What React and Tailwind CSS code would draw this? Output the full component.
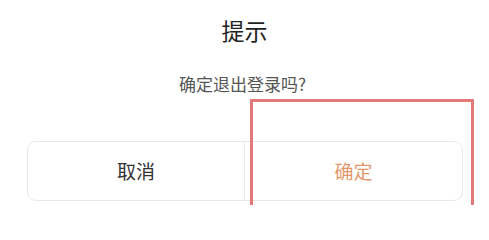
export default function App() {
  return (
    <div
      className="relative w-[489px] h-[205px] overflow-hidden bg-white"
      style={{ fontFamily: '"Noto Sans CJK SC", "Noto Sans", sans-serif' }}
    >
      {/* Title */}
      <h2 className="pt-[15px] text-center text-[23px] leading-[30px] text-[#222]">提示</h2>

      {/* Message */}
      <p className="mt-[27px] pr-[4px] text-center text-[17px] leading-[24px] text-[#555]">确定退出登录吗?</p>

      {/* Buttons */}
      <div className="mt-[45px] ml-[27px] w-[436px] h-[60px] grid grid-cols-2 border border-[#e8e8e8] rounded-[9px]">
        <button className="flex items-center justify-center text-[19px] text-[#333] border-r border-[#ececec]">
          取消
        </button>
        <button className="flex items-center justify-center text-[19px] text-[#e4976c]">
          确定
        </button>
      </div>

      {/* Annotation box */}
      <div className="absolute left-[250px] top-[99px] w-[224px] h-[130px] border-[3px] border-[#e06a6a]/90" />
    </div>
  );
}
